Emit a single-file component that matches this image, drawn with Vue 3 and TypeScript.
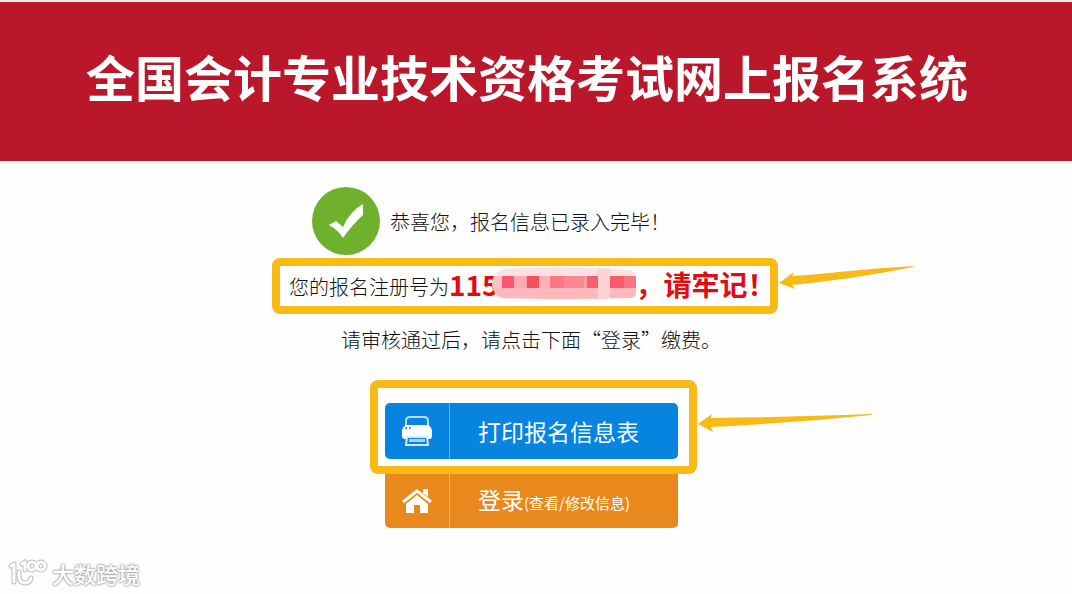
<script setup lang="ts">
interface MosaicCell {
  x: number
  y: number
  w: number
  h: number
  fill: string
}

const title = '全国会计专业技术资格考试网上报名系统'
const numberPrefix = '115'

const mosaic: MosaicCell[] = [
  { x: 0, y: 0, w: 144, h: 9, fill: '#fde0e3' },
  { x: 0, y: 9, w: 144, h: 12, fill: '#fb9ba3' },
  { x: 0, y: 21, w: 144, h: 11, fill: '#fdb8bd' },
  { x: 0, y: 9, w: 10, h: 12, fill: '#fcc3c8' },
  { x: 10, y: 9, w: 12, h: 12, fill: '#f8566a' },
  { x: 22, y: 9, w: 12, h: 12, fill: '#fba9b2' },
  { x: 35, y: 9, w: 12, h: 12, fill: '#f65060' },
  { x: 47, y: 9, w: 11, h: 12, fill: '#fcb0b7' },
  { x: 58, y: 9, w: 14, h: 12, fill: '#fb7881' },
  { x: 72, y: 9, w: 20, h: 12, fill: '#fb8991' },
  { x: 95, y: 9, w: 11, h: 12, fill: '#f75f6d' },
  { x: 106, y: 0, w: 12, h: 32, fill: '#fdd3d6' },
  { x: 118, y: 9, w: 14, h: 12, fill: '#f95b6b' },
  { x: 132, y: 9, w: 12, h: 12, fill: '#f8747f' },
]
</script>

<template>
  <div class="page">
    <header class="banner">
      <h1>{{ title }}</h1>
    </header>

    <main class="content">
      <div class="success">
        <svg class="tick" viewBox="0 0 68 68" aria-hidden="true">
          <circle cx="34" cy="34" r="34" fill="#6fb02c" />
          <path d="M17 38 L24 34 L31 40 Q38 24 51 17 L51 28 Q40 38 31 51 Q26 43 17 38Z" fill="#fff" />
        </svg>
        <p>恭喜您，报名信息已录入完毕！</p>
      </div>

      <div class="mark">
        <p class="frame number">
          <span>您的报名注册号为</span>
          <strong>{{ numberPrefix }}</strong>
          <svg class="mosaic" viewBox="0 0 144 32" aria-hidden="true">
            <defs>
              <clipPath id="mosaic-shape">
                <path d="M12 2 Q70 -2 138 3 Q144 5 144 12 V26 Q144 31 136 31 Q70 33 10 31 Q0 28 0 16 Q1 5 12 2Z" />
              </clipPath>
            </defs>
            <g clip-path="url(#mosaic-shape)">
              <rect v-for="(c, i) in mosaic" :key="i" :x="c.x" :y="c.y" :width="c.w" :height="c.h" :fill="c.fill" />
            </g>
          </svg>
          <strong>，请牢记！</strong>
        </p>
        <svg class="arrow arrow-number" viewBox="0 0 136 26" aria-hidden="true">
          <path d="M1 18 L16 7 L14 11 Q45 9 60 7 Q100 3 135 1 L135 2 Q75 14 14 20 L17 24Z" fill="#f7ba16" />
        </svg>
      </div>

      <p class="hint">请审核通过后，请点击下面“登录”缴费。</p>

      <div class="actions">
        <div class="mark">
          <div class="frame print">
            <button type="button" class="action blue">
              <span class="icon">
                <svg viewBox="0 0 30 30" aria-hidden="true">
                  <path d="M4 10 V5 Q4 1 8 1 H22 Q26 1 26 5 V10" fill="none" stroke="#b9dcf8" stroke-width="2" />
                  <path d="M4 9 H26 Q30 11 30 15 V20 Q30 23 27 23 H26 L25 20 H5 L4 23 H3 Q0 23 0 20 V15 Q0 11 4 9Z" fill="#fff" />
                  <circle cx="4" cy="12" r="1" fill="#0684df" />
                  <circle cx="8" cy="12" r="1" fill="#0684df" />
                  <path d="M5 21 L4 29 H26 L25 21Z" fill="#0684df" stroke="#d7ebfb" stroke-width="2" />
                  <path d="M7 23 H23 L23 26 H7Z" fill="#a8d4f6" />
                </svg>
              </span>
              <span class="label">打印报名信息表</span>
            </button>
          </div>
          <svg class="arrow arrow-print" viewBox="0 0 176 20" aria-hidden="true">
            <path d="M1 11 L15 1 L14 5 Q90 4 175 1 L175 2 Q95 10 14 14 L16 19Z" fill="#f7ba16" />
          </svg>
        </div>
        <button type="button" class="action orange">
          <span class="icon">
            <svg viewBox="0 0 30 26" aria-hidden="true">
              <path d="M1 14 L15 3 L29 14" fill="none" stroke="#fff" stroke-width="3" />
              <path d="M21 1 H26 V9 L21 5Z" fill="#fff" />
              <path d="M4 16 L15 7 L26 16 V25 H18 V17 H12 V25 H4Z" fill="#fff" />
            </svg>
          </span>
          <span class="label">登录<small>(查看/修改信息)</small></span>
        </button>
      </div>
    </main>

    <footer class="watermark">
      <svg viewBox="0 0 40 28" aria-hidden="true">
        <g fill="none" stroke-linecap="round" stroke-linejoin="round">
          <g stroke="#bdbdbd" stroke-width="5">
            <path d="M3 7 L6 5 V23" />
            <path d="M11 13 Q10 24 17 24 Q22 24 23 19" />
            <path d="M14 5 L17 3 V11" />
            <circle cx="24" cy="7" r="4" />
            <circle cx="33" cy="7" r="4" />
          </g>
          <g stroke="#fff" stroke-width="3">
            <path d="M3 7 L6 5 V23" />
            <path d="M11 13 Q10 24 17 24 Q22 24 23 19" />
            <path d="M14 5 L17 3 V11" />
            <circle cx="24" cy="7" r="4" />
            <circle cx="33" cy="7" r="4" />
          </g>
        </g>
      </svg>
      <span>大数跨境</span>
    </footer>
  </div>
</template>

<style>
body {
  margin: 0;
  background: #fff;
}
</style>

<style scoped>
.page {
  display: flex;
  flex-direction: column;
  min-height: 100vh;
  box-sizing: border-box;
  border-top: 2px solid #f6e9ea;
  background: #fefefe;
  color: #111;
  font-family: "Noto Sans CJK SC", "Noto Sans", sans-serif;
  font-size: 20px;
  line-height: 28px;
}

p,
h1 {
  margin: 0;
}

.banner {
  padding: 38px 18px 49px 0;
  background: #ba182a;
  color: #fff;
  text-align: center;
}

h1 {
  font-size: 49px;
  line-height: 72px;
  font-weight: 700;
  white-space: nowrap;
}

.content {
  display: flex;
  flex-direction: column;
  align-self: center;
  width: 506px;
  margin-right: 22px;
  padding-top: 26px;
  font-weight: 300;
}

.success {
  display: flex;
  align-items: center;
  gap: 10px;
  padding-left: 40px;
  margin-bottom: 3px;
  white-space: nowrap;
}

.success p {
  padding-top: 2px;
}

.tick {
  width: 68px;
  height: 68px;
}

.mark {
  position: relative;
}

.frame {
  box-sizing: border-box;
  border: 8px solid #f7ba16;
  border-radius: 8px;
}

.number {
  display: flex;
  align-items: center;
  height: 56px;
  padding-left: 9px;
  white-space: nowrap;
}

.number span {
  padding-top: 2px;
}

.number strong {
  padding-bottom: 4px;
  color: #e30b12;
  font-size: 28px;
  line-height: 36px;
  font-weight: 700;
}

.mosaic {
  flex: none;
  width: 144px;
  height: 32px;
  margin-left: -7px;
  padding-bottom: 6px;
}

.arrow {
  position: absolute;
  left: 100%;
}

.arrow-number {
  top: 7px;
  width: 136px;
  height: 26px;
}

.arrow-print {
  top: 33px;
  width: 176px;
  height: 20px;
}

.hint {
  padding: 12px 0 0 69px;
  white-space: nowrap;
}

.actions {
  width: 327px;
  margin: 26px 0 0 98px;
}

.print {
  padding: 15px 11px 7px 7px;
}

.action {
  display: flex;
  width: 293px;
  height: 56px;
  padding: 0;
  border: 0;
  border-radius: 5px;
  color: #fff;
  font: inherit;
  font-size: 23px;
  font-weight: 400;
  text-align: left;
  white-space: nowrap;
  cursor: pointer;
}

.blue {
  background: #0684df;
}

.orange {
  height: 54px;
  margin-left: 15px;
  border-radius: 0 0 5px 5px;
  background: #e9891d;
}

.icon {
  display: flex;
  align-items: center;
  justify-content: center;
  width: 64px;
  height: 100%;
  border-right: 1px solid rgba(255, 255, 255, 0.4);
}

.icon svg {
  width: 30px;
}

.label {
  align-self: center;
  padding-left: 28px;
}

small {
  font-size: 15px;
}

.watermark {
  display: flex;
  align-items: center;
  gap: 4px;
  margin-top: auto;
  padding: 0 0 7px 8px;
  color: #fff;
  font-size: 22px;
  font-weight: 500;
  text-shadow: 0 0 2px #999, 0 0 2px #aaa, 0 0 3px #bbb;
}

.watermark svg {
  width: 40px;
  height: 28px;
}
</style>
